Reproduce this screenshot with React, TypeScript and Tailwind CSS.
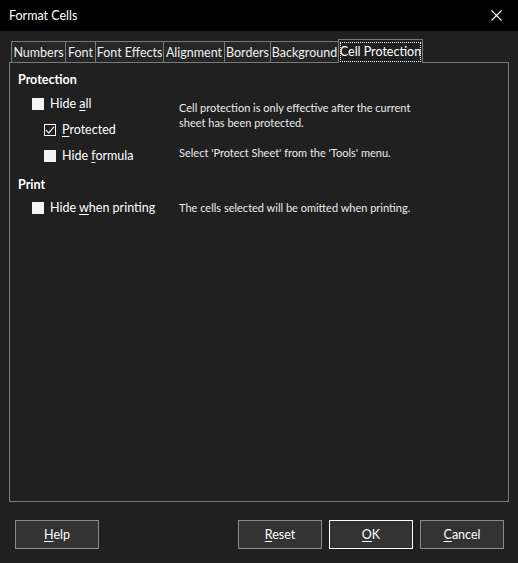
import React from "react";

const tabs = [
  { name: "Numbers", w: "w-[54px]" },
  { name: "Font", w: "w-[30px]" },
  { name: "Font Effects", w: "w-[68px]" },
  { name: "Alignment", w: "w-[61px]" },
  { name: "Borders", w: "w-[46px]" },
  { name: "Background", w: "w-[68px]" },
];

function Box({ checked }: { checked?: boolean }) {
  if (checked) {
    return (
      <span className="flex w-[12px] h-[12px] border border-white bg-[#202020] items-center justify-center">
        <svg width="10" height="10" viewBox="0 0 10 10">
          <path d="M1 5.2 L3.8 8 L9 1.6" fill="none" stroke="#e8e8e8" strokeWidth="1.2" />
        </svg>
      </span>
    );
  }
  return <span className="block w-[12px] h-[12px] bg-[#f4f4f4]" />;
}

function Check({
  pre,
  u,
  post,
  checked,
  indent,
  className,
}: {
  pre: string;
  u: string;
  post: string;
  checked?: boolean;
  indent?: boolean;
  className?: string;
}) {
  return (
    <div className={`flex items-center h-[16px] ${indent ? "pl-[26px]" : "pl-[14px]"} ${className}`}>
      <Box checked={checked} />
      <span className="ml-[6px] whitespace-nowrap">
        {pre}
        <span className="underline underline-offset-2">{u}</span>
        {post}
      </span>
    </div>
  );
}

function Btn({ u, rest, primary }: { u: string; rest: string; primary?: boolean }) {
  return (
    <button
      className={`w-[84px] h-[29px] bg-[#333333] border ${
        primary ? "border-white" : "border-[#8a8a8a]"
      } text-white text-[12.5px] flex items-center justify-center`}
    >
      <span>
        <span className="underline underline-offset-2">{u}</span>
        {rest}
      </span>
    </button>
  );
}

export default function App() {
  return (
    <div
      className="w-[518px] h-[563px] flex flex-col bg-[#202020] text-white text-[12.5px] leading-[16px]"
      style={{ fontFamily: 'Lato, "Noto Sans", sans-serif' }}
    >
      <div className="h-[31px] bg-black flex items-center justify-between pl-[9px] pr-[16px]">
        <span>Format Cells</span>
        <svg width="11" height="11" viewBox="0 0 11 11">
          <path d="M0.5 0.5 L10.5 10.5 M10.5 0.5 L0.5 10.5" stroke="#ffffff" strokeWidth="1.1" />
        </svg>
      </div>

      <div className="flex-1 flex flex-col pt-[8px] px-[9px]">
        <div className="flex items-end h-[23px] pl-[2px]">
          {tabs.map((t) => (
            <div
              key={t.name}
              className={`${t.w} h-[21px] border-l border-t border-[#7a7a7a] bg-[#262626] flex items-center justify-center pt-[1px] whitespace-nowrap text-[#f0f0f0]`}
            >
              {t.name}
            </div>
          ))}
          <div className="w-[85px] h-[24px] -mb-px relative z-10 border-l border-t border-r border-[#7a7a7a] bg-[#202020] flex items-start justify-center pt-[2px]">
            <span className="border border-dotted border-white px-[1px] w-[81px] h-[20px] flex items-center justify-center whitespace-nowrap">
              Cell Protection
            </span>
          </div>
        </div>

        <div className="h-[440px] border border-[#7a7a7a] flex">
          <div className="w-[169px] pl-[8px] flex flex-col">
            <div className="mt-[9px] font-bold">Protection</div>
            <Check className="mt-[8px]" pre="Hide " u="a" post="ll" />
            <Check className="mt-[10px]" pre="" u="P" post="rotected" checked indent />
            <Check className="mt-[10px]" pre="Hide " u="f" post="ormula" indent />
            <div className="mt-[13px] font-bold">Print</div>
            <Check className="mt-[7px]" pre="Hide " u="w" post="hen printing" />
          </div>
          <div className="flex flex-col text-[#ececec] text-[11px] leading-[15px]">
            <div className="mt-[37px]">
              Cell protection is only effective after the current
              <br />
              sheet has been protected.
            </div>
            <div className="mt-[15px]">Select 'Protect Sheet' from the 'Tools' menu.</div>
            <div className="mt-[40px]">The cells selected will be omitted when printing.</div>
          </div>
        </div>

        <div className="flex items-center mt-[18px] pl-[6px] pr-[5px]">
          <Btn u="H" rest="elp" />
          <div className="flex-1" />
          <div className="flex gap-[7px]">
            <Btn u="R" rest="eset" />
            <Btn u="O" rest="K" primary />
            <Btn u="C" rest="ancel" />
          </div>
        </div>
      </div>
    </div>
  );
}
